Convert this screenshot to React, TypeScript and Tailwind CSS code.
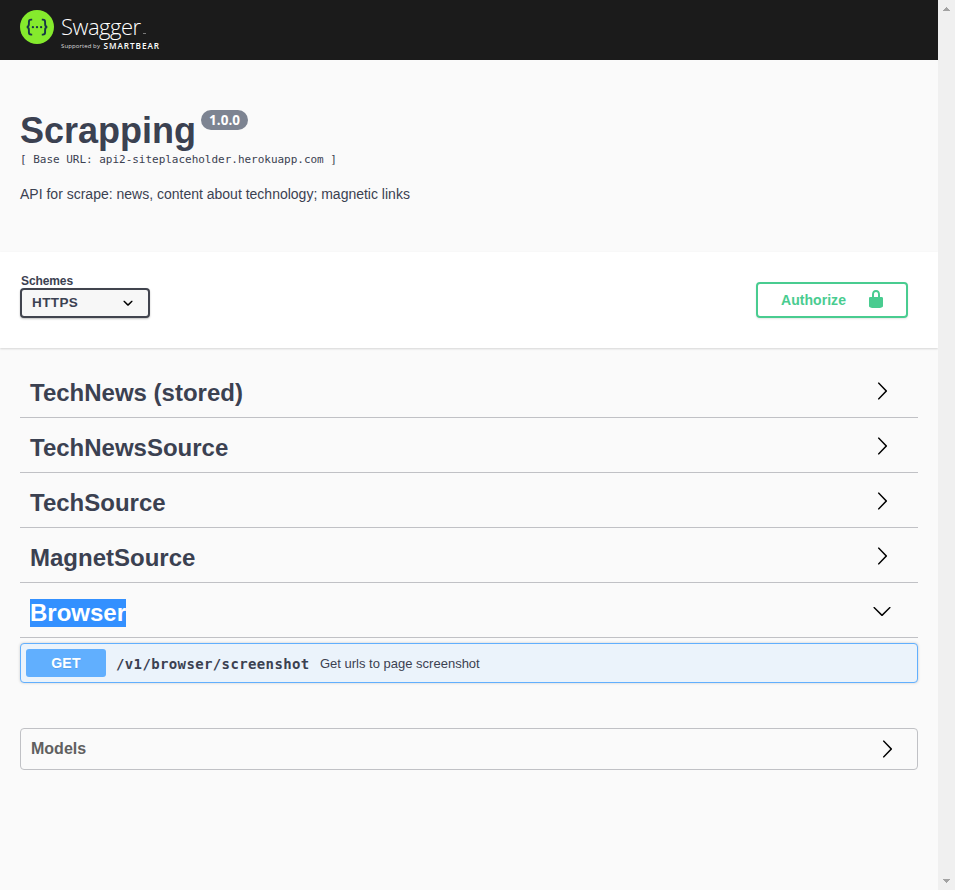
const arrowRight =
  'M13.25 10L6.109 2.58c-.268-.27-.268-.707 0-.979.268-.27.701-.27.969 0l7.83 7.908c.268.271.268.709 0 .979l-7.83 7.908c-.268.271-.701.27-.969 0-.268-.269-.268-.707 0-.979L13.25 10z';
const arrowDown =
  'M17.418 6.109c.272-.268.709-.268.979 0s.271.701 0 .969l-7.908 7.83c-.27.268-.707.268-.979 0l-7.908-7.83c-.27-.268-.27-.701 0-.969.271-.268.709-.268.979 0L10 13.25l7.418-7.141z';
const selectArrow =
  'M13.418 7.859c.271-.268.709-.268.978 0 .27.268.272.701 0 .969l-3.908 3.83c-.27.268-.707.268-.979 0l-3.908-3.83c-.27-.267-.27-.701 0-.969.271-.268.709-.268.978 0L10 11l3.418-3.141z';
const lockShape =
  'M15.8 8H14V5.6C14 2.703 12.665 1 10 1 7.334 1 6 2.703 6 5.6V8H4c-.553 0-1 .646-1 1.199V17c0 .549.428 1.139.951 1.307l1.197.387C5.672 18.861 6.55 19 7.1 19h5.8c.549 0 1.428-.139 1.951-.307l1.196-.387c.524-.167.953-.757.953-1.306V9.199C17 8.646 16.352 8 15.8 8zM12 8H8V5.199C8 3.754 8.797 3 10 3c1.203 0 2 .754 2 2.199V8z';

function Icon({ d, className = '' }: { d: string; className?: string }) {
  return (
    <svg viewBox="0 0 20 20" className={`size-5 shrink-0 fill-current ${className}`}>
      <path d={d} />
    </svg>
  );
}

function Logo() {
  return (
    <div className="flex items-start pt-2.5 pl-5 font-['Open_Sans',sans-serif] text-white">
      <svg viewBox="0 0 34 34" className="size-[34px] shrink-0">
        <circle cx="17" cy="17" r="17" fill="#85ea2d" />
        <g fill="none" stroke="#173647" strokeWidth="1.9">
          <path d="M12.2 9.6h-1.1c-1.7 0-2.2.9-2.2 2.3v2.2c0 1.7-.5 2.7-2.1 2.9 1.6.2 2.1 1.2 2.1 2.9v2.4c0 1.6.6 2.3 2.2 2.3h1.1" />
          <path d="M21.8 9.6h1.1c1.7 0 2.2.9 2.2 2.3v2.2c0 1.7.5 2.7 2.1 2.9-1.6.2-2.1 1.2-2.1 2.9v2.4c0 1.6-.6 2.3-2.2 2.3h-1.1" />
        </g>
        <g fill="#173647">
          <circle cx="12.9" cy="17.2" r="1.15" />
          <circle cx="17" cy="17.2" r="1.15" />
          <circle cx="21.1" cy="17.2" r="1.15" />
        </g>
      </svg>
      <div className="ml-[7px] flex flex-col">
        <div className="flex h-8 items-end whitespace-nowrap">
          <span className="text-[22px] leading-[31px] font-light tracking-[-0.5px]">Swagger</span>
          <span className="mb-[8px] ml-0.5 h-px w-[3px] bg-[#777777]" />
        </div>
        <div className="flex h-2 items-center whitespace-nowrap leading-2">
          <span className="w-[42.5px] text-[6px] tracking-[0.1px] text-[#dddddd]">Supported by</span>
          <span className="-mt-px text-[8.2px] font-semibold tracking-[0.95px]">SMARTBEAR</span>
        </div>
      </div>
    </div>
  );
}

const tags = [
  { name: 'TechNews (stored)', open: false },
  { name: 'TechNewsSource', open: false },
  { name: 'TechSource', open: false },
  { name: 'MagnetSource', open: false },
  { name: 'Browser', open: true },
];

export default function App() {
  return (
    <div className="flex h-[890px] w-[955px] overflow-hidden bg-[#fafafa] font-['Liberation_Sans',Arial,sans-serif] text-[#3b4151]">
      <div className="flex w-[938px] flex-col">
        <header className="h-[60px] bg-[#1b1b1b]">
          <Logo />
        </header>

        <section className="h-[192px] px-5 pt-[50px]">
          <div className="flex items-start">
            <h1 className="text-[36px] leading-[41px] font-bold">Scrapping</h1>
            <span className="ml-[5px] flex h-5 w-[47px] items-center justify-center rounded-full bg-[#7d8492] font-['Open_Sans',sans-serif] text-[13.5px] font-bold text-white">
              1.0.0
            </span>
          </div>
          <div className="mt-px font-['DejaVu_Sans_Mono',monospace] text-[11px] leading-4 tracking-[-0.02px] whitespace-nowrap">
            [ Base URL: api2-siteplaceholder.herokuapp.com ]
          </div>
          <p className="mt-[18px] text-sm leading-4">API for scrape: news, content about technology; magnetic links</p>
        </section>

        <section className="flex h-24 shrink-0 items-start justify-between bg-white pr-[30px] pl-5 shadow-[0_1px_2px_0_rgba(0,0,0,0.15)]">
          <div className="pt-[22px]">
            <div className="pl-px text-xs leading-[14px] font-bold tracking-[-0.1px]">Schemes</div>
            <div className="flex h-[30px] w-[130px] items-center justify-between rounded border-2 border-[#41444e] bg-[#f7f7f7] pr-[10px] pl-2.5 shadow-[0_1px_2px_0_rgba(0,0,0,0.25)]">
              <span className="text-[13.5px] font-bold tracking-[0.4px]">HTTPS</span>
              <Icon d={selectArrow} className="text-black" />
            </div>
          </div>
          <button className="mt-[30px] flex h-9 w-[152px] items-center rounded border-2 border-[#49cc90] pl-[23px] text-[#49cc90] shadow-[0_1px_2px_rgba(0,0,0,0.1)]">
            <span className="w-[85px] text-left text-sm font-bold tracking-[0.05px]">Authorize</span>
            <Icon d={lockShape} className="-mt-0.5" />
          </button>
        </section>

        <main className="px-5 pt-[15px]">
          {tags.map((tag) => (
            <div
              key={tag.name}
              className="flex h-[55px] items-center justify-between border-b border-[#c0c1c5] pr-[26px] pl-2.5"
            >
              <h2 className="mt-1.5 text-2xl leading-7 font-bold">
                <span className={tag.open ? 'block bg-[#3390ff] text-white' : ''}>{tag.name}</span>
              </h2>
              <Icon d={tag.open ? arrowDown : arrowRight} className="mt-0.5 text-black" />
            </div>
          ))}

          <div className="mt-[5px] flex h-10 items-center rounded border border-[#61affe] bg-[#ebf3fb] pl-[5px] shadow-[0_0_3px_rgba(0,0,0,0.19)]">
            <span className="flex h-7 w-20 items-center justify-center rounded-[3px] bg-[#61affe] text-sm font-bold tracking-[0.3px] text-white [text-shadow:0_1px_0_rgba(0,0,0,0.1)]">
              GET
            </span>
            <span className="mt-0.5 ml-2.5 w-[204px] font-['DejaVu_Sans_Mono',monospace] text-[14px] font-bold tracking-[0.37px] whitespace-nowrap">
              /v1/browser/screenshot
            </span>
            <span className="mt-px text-[13px]">Get urls to page screenshot</span>
          </div>

          <div className="mt-[45px] flex h-[42px] items-center justify-between rounded border border-[#c0c1c5] pr-5 pl-2.5">
            <h3 className="text-base font-bold text-[#606060]">Models</h3>
            <Icon d={arrowRight} className="text-black" />
          </div>
        </main>
      </div>

      <div className="flex w-[17px] flex-col items-center justify-between bg-[#f0f0f0] pt-[7px] pb-[7px]">
        <svg width="7" height="4" viewBox="0 0 7 4" fill="#a3a3a3" shapeRendering="crispEdges">
          <path d="M3 0h1v1h1v1h1v1h1v1H0V3h1V2h1V1h1z" />
        </svg>
        <svg width="7" height="4" viewBox="0 0 7 4" fill="#a3a3a3" shapeRendering="crispEdges">
          <path d="M0 0h7v1H6v1H5v1H4v1H3V3H2V2H1V1H0z" />
        </svg>
      </div>
    </div>
  );
}
